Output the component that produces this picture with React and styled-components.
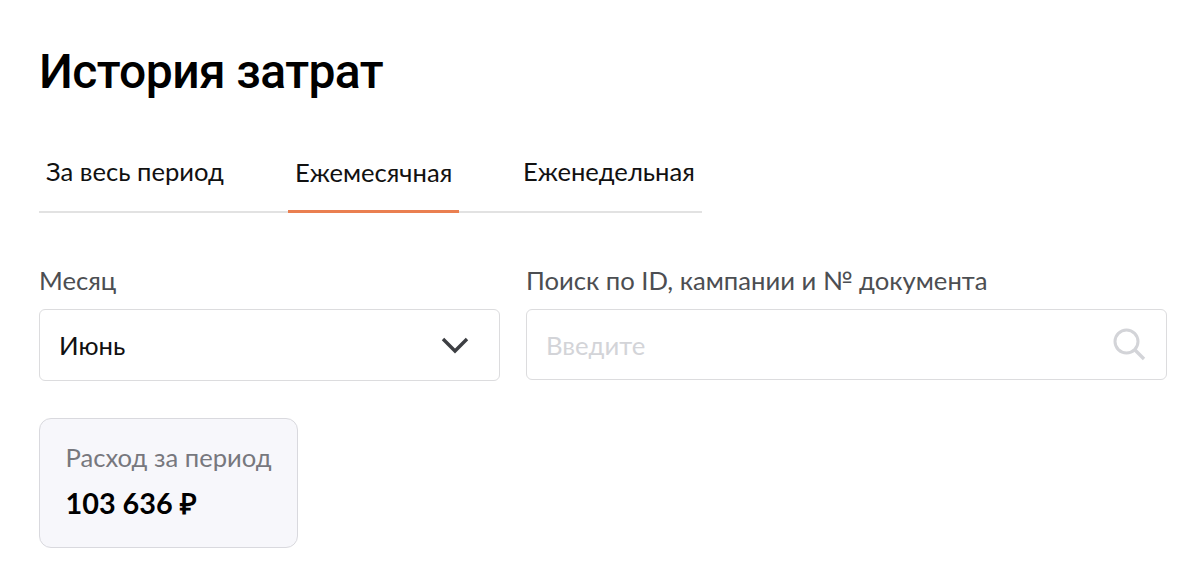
import React from "react";
import styled, { createGlobalStyle } from "styled-components";

const GlobalStyle = createGlobalStyle`
  html, body {
    margin: 0;
    padding: 0;
    background: #fff;
  }
  body {
    font-family: Lato, "Open Sans", sans-serif;
    color: #000;
  }
`;

const Page = styled.div`
  width: 1200px;
  height: 572px;
  box-sizing: border-box;
  padding: 40px 33px 0 39px;
  overflow: hidden;
`;

const Title = styled.h1`
  margin: 0;
  font-family: Roboto, Lato, sans-serif;
  font-size: 48px;
  line-height: 64px;
  font-weight: 500;
  letter-spacing: -0.6px;
`;

const Tabs = styled.div`
  display: flex;
  width: 663px;
  height: 69px;
  margin-top: 40px;
  box-sizing: border-box;
  border-bottom: 2px solid #e2e2e2;
`;

const Tab = styled.div`
  box-sizing: border-box;
  width: ${(p) => p.$width}px;
  height: 69px;
  padding: ${(p) => (p.$active ? 11 : 10)}px 0 0 ${(p) => p.$indent}px;
  font-size: 25.6px;
  line-height: 34px;
  white-space: nowrap;
  color: #111;
  border-bottom: ${(p) => (p.$active ? "3px solid #ea7f50" : "none")};
`;

const Filters = styled.div`
  display: flex;
  gap: 26px;
  margin-top: 50px;
`;

const Field = styled.div`
  width: ${(p) => p.$width}px;
`;

const Label = styled.div`
  font-size: 25.65px;
  line-height: 34px;
  color: #4c4e52;
`;

const Control = styled.div`
  display: flex;
  align-items: center;
  justify-content: space-between;
  box-sizing: border-box;
  height: ${(p) => p.$height}px;
  margin-top: 12px;
  padding: 0 ${(p) => p.$right}px 0 19px;
  border: 1px solid #dcdcde;
  border-radius: 6px;
  background: #fff;
  font-size: 25.7px;
  color: ${(p) => (p.$placeholder ? "#d3d4d8" : "#111")};
`;

const Card = styled.div`
  box-sizing: border-box;
  width: 259px;
  height: 130px;
  margin-top: 37px;
  padding: 21px 0 0 25.5px;
  background: #f7f7fb;
  border: 1px solid #d9d9de;
  border-radius: 12px;
`;

const CardLabel = styled.div`
  font-size: 25.6px;
  line-height: 34px;
  color: #77787e;
`;

const CardValue = styled.div`
  margin-top: 10px;
  font-size: 28.8px;
  line-height: 38px;
  font-weight: 700;
  color: #000;
`;

const Icon = styled.svg`
  display: block;
  flex: none;
`;

export default function App() {
  return (
    <Page>
      <GlobalStyle />
      <Title>История затрат</Title>
      <Tabs>
        <Tab $width={249} $indent={7}>За весь период</Tab>
        <Tab $width={171} $indent={7} $active>Ежемесячная</Tab>
        <Tab $width={243} $indent={64}>Еженедельная</Tab>
      </Tabs>
      <Filters>
        <Field $width={461}>
          <Label>Месяц</Label>
          <Control $height={72} $right={29}>
            Июнь
            <Icon width="30" height="20" viewBox="0 0 30 20" fill="none">
              <path d="M3 4l12 12L27 4" stroke="#3d3f43" strokeWidth="3.4" />
            </Icon>
          </Control>
        </Field>
        <Field $width={641}>
          <Label>Поиск по ID, кампании и № документа</Label>
          <Control $height={71} $right={20} $placeholder>
            Введите
            <Icon width="34" height="34" viewBox="0 0 34 34" fill="none">
              <circle cx="14.5" cy="13.5" r="11.5" stroke="#d3d4d8" strokeWidth="3" />
              <path d="M23 22l9 9" stroke="#d3d4d8" strokeWidth="3.4" />
            </Icon>
          </Control>
        </Field>
      </Filters>
      <Card>
        <CardLabel>Расход за период</CardLabel>
        <CardValue>103 636 ₽</CardValue>
      </Card>
    </Page>
  );
}
